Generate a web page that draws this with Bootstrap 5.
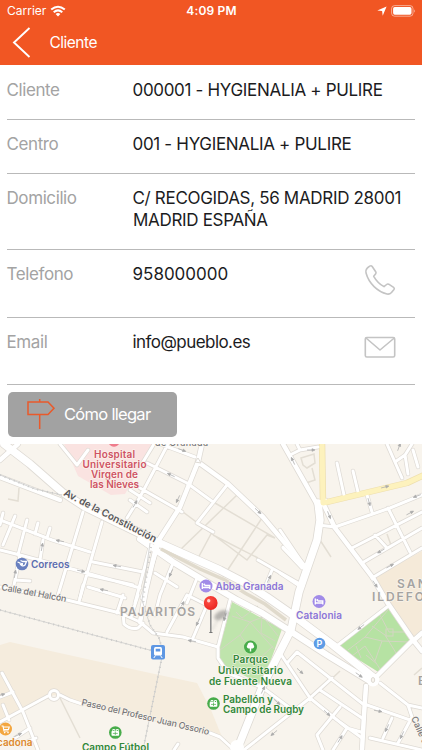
<!DOCTYPE html>
<html lang="es">
<head>
    <meta charset="UTF-8">
    <meta name="viewport" content="width=device-width, initial-scale=1.0">
    <title>Cliente</title>
    <link href="https://cdn.jsdelivr.net/npm/bootstrap@5.3.0/dist/css/bootstrap.min.css" rel="stylesheet">
    <style>
        body {
            font-family: Inter, "Liberation Sans", sans-serif;
            height: 750px;
            overflow: hidden;
            color: #1c1c1e;
        }
        .app-header {
            background-color: #f15623;
            height: 65px;
        }
        .status-bar {
            height: 22px;
            padding: 0 6px 0 7px;
            font-size: 12px;
        }
        .status-side { width: 90px; }
        .status-time { letter-spacing: .15px; }
        .title-bar {
            height: 41px;
            padding-left: 12px;
            gap: 17.5px;
            font-size: 15.5px;
            letter-spacing: -.5px;
        }
        .title-bar span { padding-top: 1px; }
        .datos {
            margin: 0 7px;
        }
        .dato {
            border-bottom: 1px solid #b9b9b9;
            height: 54px;
            padding-top: 14px;
            font-size: 17px;
            line-height: 21.5px;
        }
        .dato-first { height: 55px; padding-top: 15px; }
        .dato-address { height: 76px; }
        .dato-action { height: 67.5px; }
        .dato-label {
            width: 126px;
            color: #a3a3a3;
            letter-spacing: -.4px;
            text-indent: -.5px;
        }
        .dato-value {
            letter-spacing: -.32px;
            text-indent: -.5px;
        }
        .dato-tel { letter-spacing: 0; }
        .dato-mail { letter-spacing: -.55px; }
        .dato-icon { margin-right: 19px; }
        .btn-route {
            --bs-btn-bg: #a2a2a2;
            --bs-btn-color: #fff;
            --bs-btn-border-width: 0;
            --bs-btn-border-radius: 5px;
            --bs-btn-padding-y: 0;
            --bs-btn-padding-x: 18px;
            width: 168.5px;
            height: 45px;
            margin: 7px 0 7px 8px;
            font-size: 16.5px;
            letter-spacing: -.7px;
            gap: 8px;
        }
        .mapa { height: 306px; }
        .mapa text {
            font-family: Inter, "Liberation Sans", sans-serif;
            font-weight: 600;
            font-size: 10px;
            paint-order: stroke;
            stroke: #faf6ef;
            stroke-opacity: .8;
            stroke-width: 1.6px;
            stroke-linejoin: round;
        }
        .mapa .calle { fill: #77777a; font-weight: 500; font-size: 9px; }
        .mapa .avenida { fill: #58585b; }
        .mapa .barrio { fill: #a5a3a1; font-size: 12px; }
        .mapa .letra-p { stroke: none; font-size: 9px; }
    </style>
</head>
<body class="bg-white d-flex flex-column">
    <header class="app-header text-white flex-shrink-0">
        <div class="status-bar d-flex align-items-center justify-content-between">
            <div class="status-side d-flex align-items-center gap-1">
                <span>Carrier</span>
                <svg width="16" height="12" viewBox="0 0 16 12" fill="none" stroke="#fff" stroke-width="2">
                    <path d="M1.2 4.6Q8-1.2 14.8 4.6M3.7 7.2Q8 3.5 12.3 7.2"/>
                    <path d="M8 11.6L5.6 9Q8 7.1 10.4 9Z" fill="#fff" stroke="none"/>
                </svg>
            </div>
            <span class="status-time fw-semibold">4:09 PM</span>
            <div class="status-side d-flex align-items-center justify-content-end gap-1">
                <svg width="10" height="10" viewBox="0 0 10 10"><path d="M9.6.4L5.7 9.7 5.1 5 .3 4.4Z" fill="#fff"/></svg>
                <svg width="25" height="12" viewBox="0 0 25 12">
                    <rect x=".6" y=".6" width="21.4" height="10.6" rx="3" fill="none" stroke="#fff" stroke-opacity=".5"/>
                    <rect x="2.1" y="2.1" width="18.4" height="7.6" rx="1.6" fill="#fff"/>
                    <path d="M23.2 4.2Q25 6 23.2 7.8Z" fill="#fff" fill-opacity=".6"/>
                </svg>
            </div>
        </div>
        <div class="title-bar d-flex align-items-center">
            <svg width="20" height="32" viewBox="0 0 20 32" fill="none" stroke="#fff" stroke-width="1.9"><path d="M17.5 1L2 15.500L17.500 30"/></svg>
            <span>Cliente</span>
        </div>
    </header>

    <main class="datos">
        <div class="dato dato-first d-flex">
            <div class="dato-label">Cliente</div>
            <div class="dato-value">000001 - HYGIENALIA + PULIRE</div>
        </div>
        <div class="dato d-flex">
            <div class="dato-label">Centro</div>
            <div class="dato-value">001 - HYGIENALIA + PULIRE</div>
        </div>
        <div class="dato dato-address d-flex">
            <div class="dato-label">Domicilio</div>
            <div class="dato-value text-nowrap">C/ RECOGIDAS, 56 MADRID 28001<br>MADRID ESPAÑA</div>
        </div>
        <div class="dato dato-action d-flex">
            <div class="dato-label">Telefono</div>
            <div class="dato-value dato-tel flex-grow-1">958000000</div>
            <svg class="dato-icon" width="32" height="32" viewBox="0 0 32 32" fill="none" stroke="#c4c4c4" stroke-width="1.6" stroke-linejoin="round">
                <path d="M5.700 2.200L3.300 4Q1.300 6 2.200 9.500C5 19.500 13.500 27.500 23 30Q25.500 30.600 27.500 28.500L30 25.500Q30.800 24.300 29.600 23.400L24.700 20.200Q23.600 19.600 22.600 20.500L20 22.600C16 20.500 12 16.300 9.700 12.300L11.700 9.800Q12.400 8.900 11.700 7.800L8.200 2.500Q7.200 1.200 5.700 2.200Z"/>
            </svg>
        </div>
        <div class="dato dato-action d-flex">
            <div class="dato-label">Email</div>
            <div class="dato-value dato-mail flex-grow-1">info@pueblo.es</div>
            <svg class="dato-icon" width="32" height="32" viewBox="0 0 32 32" fill="none" stroke="#c4c4c4" stroke-width="1.6" stroke-linejoin="round">
                <rect x="1.300" y="5.500" width="29.400" height="19.500" rx="1.500"/>
                <path d="M2 6L16 18L30.300 6"/>
            </svg>
        </div>
    </main>

    <button type="button" class="btn btn-route d-flex align-items-center flex-shrink-0">
        <svg width="30" height="32" viewBox="0 0 30 32" fill="none" stroke="#e95a2b" stroke-width="1.5">
            <path d="M13.700 0V3M13.700 15.500V30M2 3H22L28 9.200L22 15.500H2Z"/>
        </svg>
        <span>Cómo llegar</span>
    </button>

    <svg class="mapa d-block w-100 flex-shrink-0" viewBox="0 444 422 306">
        <defs>
            <g id="vias-finas" fill="none">
                <path d="M60 444L77 465L88 450M0 520L52 540L90 552M3 513L0 525M15 516L3 545M27 520L18 555M38 523L35 534M50 528L47 538M43 540L40 560M0 550L20 555L83 572L140 588M83 512L58 595M102 522L80 598M93 562L143 572M89 575L133 585M88 587L125 598M150 547L135 603M20 555L13 590M15 580L30 581M168 444L140 497L127 518M154 444L140 467M160 444L195 457M147 463L187 483L213 502M140 488L182 512M130 490L150 503M130 500L147 512M227 485L197 523L213 532M258 560L298 583M283 548L302 568M272 570L265 587M173 563L160 595L155 615M158 547L142 598M155 573L177 587M197 578L187 603"/>
                <path d="M290 455L300 450L318 447M300 450L297 444M387 444L402 478M337 463L344 495M353 471L358 492M367 495L372 512M318 525L335 527L390 508L422 495M352 548L422 512M362 563L422 528M372 578L422 548M388 508L410 552M375 535L387 548M280 530L305 567M283 547L302 567M280 573L298 585M318 505L326 500M395 462L405 455L408 474M405 455L412 444M413 450L418 467"/>
                <path d="M0 587L67 600L120 613L140 622L153 633L183 637L218 647M83 585L79 602M123 595L117 613M138 595L131 617M123 613L124 624Q130 630 138 628L143 623M230 600L218 647V658L228 673L263 688L290 708M187 595L167 632M207 605L193 638M187 595L205 604M387 607L338 645M280 653L310 698L337 720L362 738M288 662L297 652L330 678L363 704M332 678L310 698L244 750M320 690L362 718M340 707L317 735L323 750M347 728L333 750M310 698L347 728L361 732M380 683L408 705L422 708M408 705L412 717L398 743M367 705L410 720M392 718L383 738M370 738L422 750"/>
                <path d="M0 722L48 696M60 695L70 700L82 704M210 733L220 737L232 748M2 673L23 712L38 750M13 692L0 697M3 705L9 720M30 728L15 738M36 738L20 745M178 744L174 750"/>
                <circle cx="54" cy="695" r="4.500"/>
            </g>
            <g id="vias-medias" fill="none">
                <path d="M0 477L60 500M202 444L198 462L180 507L157 543L146 590L140 622M198 462L227 483L263 517L305 567M283 444L318 506M323 503L335 528L373 578L387 602L413 640L422 651M413 640L375 678M0 460L18 444M422 633L413 641M366 686L364 715L362 750"/>
            </g>
            <g id="vias-anchas" fill="none">
                <path d="M4 444L30 464L62 492L85 507L157 542L220 570L245 583L267 597L290 613L333 645L373 677M318 503L320 520L317 540L299 592L291 630L263 685L237 750"/>
            </g>
            <g id="vias-dobles" fill="none">
                <path d="M140 539L173 562L203 580L237 600L262 613L290 631L327 655L368 680"/>
            </g>
        </defs>

        <rect y="444" width="422" height="306" fill="#f8f4ed"/>

        <!-- zonas -->
        <path d="M64 444L78 476L111 495L125 494L153 444Z" fill="#fae3e1"/>
        <path d="M0 645L10 642L150 673L197 683L211 710L222 737L82 705L54 695L0 722Z" fill="#f5ecdd"/>
        <path d="M422 551L373 578L413 640L422 632Z" fill="#f5ead9"/>
        <path d="M232 602L282 629L262 685L220 663L218 653Z" fill="#bfe4ac"/>
        <path d="M388 608L410 640L380 673L338 647Z" fill="#b6e2a3"/>

        <!-- senderos -->
        <g fill="none" stroke="#e3ded4" stroke-width="1.500">
            <path d="M215 503L275 538L267 535L247 560L183 512M237 495L180 550M262 518L223 577M212 532L197 560M213 535L258 558M318 537L331 557M60 698L80 738M8 499L18 501L19 488M301 458L314 454L315 463L307 468L303 465ZM312 468L315 480L306 483M387 534L392 548M414 675L422 668M324 686L340 671"/>
        </g>
        <g fill="none" stroke="#d3d6c2" stroke-width="1">
            <path d="M232 616L250 622L275 650M236 612L242 618L258 606M250 622L263 617L257 606M263 617L278 636M220 650L240 635L250 622M240 635L246 643M258 660L273 646M262 617L261 633L275 641M348 650L365 637L388 610M352 656L365 646L382 672M365 637L382 641L409 642M380 615L389 632L405 632M372 626L385 635L396 653M356 646L361 658M366 655L377 664M382 641L375 661"/>
            <rect x="386" y="629" width="7" height="7"/>
        </g>

        <!-- calles: borde y relleno -->
        <g stroke="#dedad4" stroke-linecap="round" stroke-linejoin="round">
            <use href="#vias-finas" stroke-width="4.400"/>
            <use href="#vias-medias" stroke-width="6"/>
            <use href="#vias-dobles" stroke-width="7.500"/>
            <use href="#vias-anchas" stroke-width="9"/>
        </g>
        <path d="M322 440L323 503L390 487L407 483L424 475" fill="none" stroke="#eedfae" stroke-width="6.400" stroke-linejoin="round"/>
        <g stroke="#fff" stroke-linecap="round" stroke-linejoin="round">
            <use href="#vias-finas" stroke-width="3"/>
            <use href="#vias-medias" stroke-width="4.500"/>
            <use href="#vias-dobles" stroke-width="6"/>
            <use href="#vias-anchas" stroke-width="7.400"/>
        </g>
        <path d="M322 440L323 503L390 487L407 483L424 475" fill="none" stroke="#fdf2bd" stroke-width="5" stroke-linejoin="round"/>
        <path d="M195 462L201 463L198 458Z" fill="#fff" stroke="#dedad4"/>
        <circle cx="373" cy="680" r="6.500" fill="#fff"/>
        <circle cx="237" cy="747" r="7" fill="#fff"/>
        <ellipse cx="373" cy="680" rx="1.700" ry="2.500" fill="#f8f4ed" stroke="#dedad4"/>
        <path d="M161 549L200 569L225 580L245 593L265 604L286 620" fill="none" stroke="#e0dacc" stroke-width="3.500"/>
        <path d="M112 515L150 533" fill="none" stroke="#d6d2c9"/>

        <!-- vías de tren -->
        <g fill="none" stroke="#cbcbca">
            <path d="M0 610L157 652M0 475L35 489L62 495M150 543L142 600L150 625L159 638L163 652L143 750" stroke-width=".8"/>
            <path d="M0 610L157 652M0 475L35 489L62 495M151 547L143 600L150 625L159 638L163 652L143 750" stroke-width="2" stroke-dasharray="1 4"/>
        </g>

        <!-- sentidos de circulación -->
        <defs><path id="flecha" d="M-4 0H3M1 -1.300L4 0L1 1.300Z" fill="#acacac" stroke="#acacac" stroke-width=".7"/></defs>
        <use href="#flecha" transform="translate(60 541) rotate(190)"/>
        <use href="#flecha" transform="translate(42 547) rotate(-80)"/>
        <use href="#flecha" transform="translate(81 571) rotate(12)"/>
        <use href="#flecha" transform="translate(117 566) rotate(190)"/>
        <use href="#flecha" transform="translate(104 590) rotate(190)"/>
        <use href="#flecha" transform="translate(15 574) rotate(-80)"/>
        <use href="#flecha" transform="translate(135 504) rotate(-60)"/>
        <use href="#flecha" transform="translate(182 450) rotate(20)"/>
        <use href="#flecha" transform="translate(171 475) rotate(205)"/>
        <use href="#flecha" transform="translate(178 499) rotate(115)"/>
        <use href="#flecha" transform="translate(258 511) rotate(42)"/>
        <use href="#flecha" transform="translate(171 573) rotate(115)"/>
        <use href="#flecha" transform="translate(269 579) rotate(-65)"/>
        <use href="#flecha" transform="translate(293 461) rotate(-115)"/>
        <use href="#flecha" transform="translate(311 450)"/>
        <use href="#flecha" transform="translate(385 487) rotate(-14)"/>
        <use href="#flecha" transform="translate(329 515) rotate(68)"/>
        <use href="#flecha" transform="translate(369 502) rotate(75)"/>
        <use href="#flecha" transform="translate(410 513) rotate(-28)"/>
        <use href="#flecha" transform="translate(381 551) rotate(150)"/>
        <use href="#flecha" transform="translate(390 566) rotate(-28)"/>
        <use href="#flecha" transform="translate(375 584) rotate(56)"/>
        <use href="#flecha" transform="translate(399 447) rotate(-70)"/>
        <use href="#flecha" transform="translate(417 496) rotate(160)"/>
        <use href="#flecha" transform="translate(361 627) rotate(142)"/>
        <use href="#flecha" transform="translate(300 671) rotate(42)"/>
        <use href="#flecha" transform="translate(359 675) rotate(35)"/>
        <use href="#flecha" transform="translate(378 711) rotate(10)"/>
        <use href="#flecha" transform="translate(387 728) rotate(115)"/>
        <use href="#flecha" transform="translate(402 735) rotate(115)"/>
        <use href="#flecha" transform="translate(327 713) rotate(42)"/>
        <use href="#flecha" transform="translate(340 739) rotate(-58)"/>
        <use href="#flecha" transform="translate(277 702) rotate(42)"/>
        <use href="#flecha" transform="translate(274 733) rotate(140)"/>
        <use href="#flecha" transform="translate(263 690) rotate(-65)"/>
        <use href="#flecha" transform="translate(192 641) rotate(190)"/>
        <use href="#flecha" transform="translate(198 622) rotate(115)"/>
        <use href="#flecha" transform="translate(182 605) rotate(-60)"/>
        <use href="#flecha" transform="translate(225 617) rotate(105)"/>
        <use href="#flecha" transform="translate(18 735) rotate(-25)"/>
        <use href="#flecha" transform="translate(1 695) rotate(-15)"/>

        <!-- rótulos de calles y barrios -->
        <text class="calle" x="155" y="445.500" textLength="53">de Granada</text>
        <g transform="translate(63 495) rotate(27.500)"><text class="avenida" textLength="103">Av. de la Constitución</text></g>
        <g transform="translate(1 590) rotate(10.500)"><text class="calle" textLength="66">Calle del Halcón</text></g>
        <g transform="translate(81 705) rotate(13.200)"><text class="calle" textLength="131">Paseo del Profesor Juan Ossorio</text></g>
        <g transform="translate(411 718) rotate(66)"><text class="calle">Calle de</text></g>
        <text class="barrio" x="120" y="616" textLength="75">PAJARITOS</text>
        <text class="barrio" x="397" y="588" textLength="51">SANTO</text>
        <text class="barrio" x="372" y="601" textLength="84">ILDEFONSO</text>
        <text class="barrio" x="418" y="685">B</text>

        <!-- lugares -->
        <path d="M109 444A6 6 0 0 0 119 444Z" fill="#ef7c8c"/>
        <g fill="#cf5363" text-anchor="middle">
            <text x="114.500" y="458" textLength="41">Hospital</text>
            <text x="114.500" y="468" textLength="64">Universitario</text>
            <text x="114.500" y="478" textLength="47">Virgen de</text>
            <text x="114.500" y="488" textLength="49">las Nieves</text>
        </g>
        <circle cx="22" cy="564" r="6.300" fill="#6980bf"/>
        <path d="M17.500 562L20 563A3 3 0 0 0 25 565L26.500 561.500H23L20.500 560.500" fill="none" stroke="#fff" stroke-width="1.300"/>
        <circle cx="22" cy="564" r="1.200" fill="#fff"/>
        <text x="31" y="568" fill="#5b6db0" textLength="38.500">Correos</text>

        <g id="hotel">
            <circle cx="206" cy="586" r="6.500" fill="#a18be8"/>
            <path d="M202.300 583V589M202.300 587.500H209.800V589M209.800 587V585.500H204.500" fill="none" stroke="#fff" stroke-width="1.300"/>
            <circle cx="204.300" cy="584.500" r="1" fill="#fff"/>
        </g>
        <text x="215.500" y="590" fill="#8c76d8" textLength="68">Abba Granada</text>
        <use href="#hotel" x="113" y="15.500"/>
        <text x="319" y="619" fill="#8c76d8" text-anchor="middle" textLength="46">Catalonia</text>

        <circle cx="319.500" cy="643.500" r="5.800" fill="#5e9ce6"/>
        <text class="letra-p" x="319.500" y="646.800" text-anchor="middle" fill="#fff">P</text>

        <rect x="151" y="645" width="14" height="14.500" rx="2" fill="#5e97e3"/>
        <path d="M155.500 647H160.500Q162 647 162 649V654Q162 655.500 160.500 655.500H155.500Q154 655.500 154 654V649Q154 647 155.500 647ZM155.700 648.700V651.400H160.300V648.700Z" fill="#fff" fill-rule="evenodd"/>
        <path d="M155.500 655.500L153.800 658M160.500 655.500L162.200 658" stroke="#fff"/>

        <circle cx="250.500" cy="647" r="6.500" fill="#48ac4b"/>
        <path d="M250.500 642.500A2.500 2.500 0 0 1 253.500 645A2 2 0 0 1 252.500 648.500H251.200V651.500H249.800V648.500H248.500A2 2 0 0 1 247.500 645A2.500 2.500 0 0 1 250.500 642.500Z" fill="#fff"/>
        <g fill="#32883a" text-anchor="middle">
            <text x="250.500" y="663" textLength="35">Parque</text>
            <text x="250.500" y="673.800" textLength="65">Universitario</text>
            <text x="250.500" y="684.600" textLength="83">de Fuente Nueva</text>
        </g>
        <g id="campo">
            <circle cx="213.500" cy="703.500" r="6.300" fill="#48ac4b"/>
            <rect x="209.700" y="702" width="7.600" height="4.800" rx=".8" fill="#fff"/>
            <path d="M211 702V700.500H213V702M214.500 702V700.500H216.500V702" fill="none" stroke="#fff" stroke-width=".9"/>
            <path d="M213.500 702.500V706M211 704.400H216" stroke="#48ac4b" stroke-width=".7"/>
        </g>
        <g fill="#32883a">
            <text x="223" y="703" textLength="50">Pabellón y</text>
            <text x="223" y="713.300" textLength="81">Campo de Rugby</text>
            <text x="82" y="750.500" textLength="67">Campo Fútbol</text>
        </g>
        <use href="#campo" x="-98.200" y="29"/>

        <circle cx="5.500" cy="729" r="6.500" fill="#f3a640"/>
        <path d="M1.500 726H3L4 731H8.500M3.300 727H9.200L8.500 729.500H4" fill="none" stroke="#fff" stroke-width="1.200"/>
        <circle cx="4.700" cy="732.600" r=".8" fill="#fff"/>
        <circle cx="8" cy="732.600" r=".8" fill="#fff"/>
        <text x="32.500" y="746" fill="#dd8a2d" text-anchor="end" textLength="54">Mercadona</text>

        <!-- chincheta -->
        <defs>
            <filter id="sombra" x="-50%" y="-50%" width="200%" height="200%"><feGaussianBlur stdDeviation="1.600"/></filter>
            <radialGradient id="bola" cx=".4" cy=".35" r=".7"><stop offset="0" stop-color="#ff5147"/><stop offset="1" stop-color="#e9251f"/></radialGradient>
        </defs>
        <path d="M212 630L219 618" stroke="#777" stroke-opacity=".35" filter="url(#sombra)"/>
        <ellipse cx="221" cy="615" rx="7.500" ry="4" transform="rotate(-28 221 615)" fill="#555" fill-opacity=".4" filter="url(#sombra)"/>
        <path d="M210.800 609V632" stroke="#8c8c8c" stroke-width="1.500"/>
        <path d="M209.300 632.500H212.500" stroke="#777"/>
        <circle cx="210.700" cy="603" r="6.900" fill="url(#bola)"/>
        <circle cx="208.700" cy="600.700" r="1.700" fill="#fff" fill-opacity=".75"/>
    </svg>

    <script src="https://cdn.jsdelivr.net/npm/bootstrap@5.3.0/dist/js/bootstrap.bundle.min.js"></script>
</body>
</html>
